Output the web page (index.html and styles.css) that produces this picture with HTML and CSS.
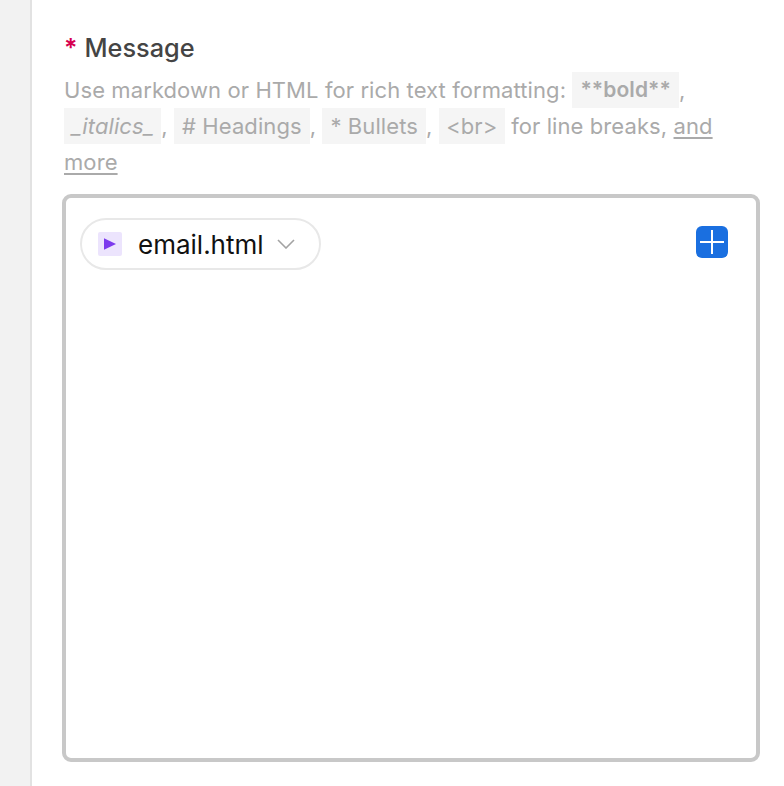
FILE: index.html
```html
<!DOCTYPE html>
<html lang="en">
<head>
<meta charset="utf-8">
<title>Message</title>
<link rel="stylesheet" href="styles.css">
</head>
<body>
<div class="page">
  <aside class="rail"></aside>
  <main class="field">
    <div class="label"><span class="req">*</span><span>Message</span></div>
    <p class="hint">Use markdown or HTML for rich text formatting: <code class="chip chip-bold">**bold**</code>, <code class="chip chip-it">_italics_</code>, <code class="chip"># Headings</code>, <code class="chip">* Bullets</code>, <code class="chip chip-br">&lt;br&gt;</code> for line breaks, <a class="more" href="#">and more</a></p>
    <div class="editor">
      <div class="file">
        <span class="file-icon"><svg viewBox="0 0 12 12" width="12" height="12"><path d="M0 0.2 L12 6 L0 11.8 Z" fill="#7c3aed"/></svg></span>
        <span class="file-name">email.html</span>
        <svg class="chev" viewBox="0 0 18 10" width="18" height="10"><path d="M1 1 L9 9 L17 1" fill="none" stroke="#a3a3a3" stroke-width="1.6"/></svg>
      </div>
      <button class="add" type="button" aria-label="Add"><svg viewBox="0 0 32 32" width="32" height="32"><path d="M4 16H28M16 4V28" stroke="#fff" stroke-width="2"/></svg></button>
    </div>
  </main>
</div>
</body>
</html>
```
FILE: styles.css
```css
* { box-sizing: border-box; }
html, body { margin: 0; height: 100%; background: #fff; }
body { font-family: Inter, "Liberation Sans", sans-serif; overflow: hidden; }
.page { display: flex; height: 786px; }
.rail { width: 32px; flex: none; background: #f2f2f2; border-right: 2px solid #e2e2e2; }
.field { width: 728px; padding: 30px 0 0 30px; flex: none; }
.label { display: flex; align-items: baseline; gap: 7px; height: 36px; margin-bottom: 6px; padding-left: 2px; font-size: 25.3px; font-weight: 500; line-height: 36px; color: #444; }
.req { color: #d6004f; font-size: 25px; font-weight: 600; }
.hint { margin: 0 0 0 2px; font-size: 22px; line-height: 36px; color: #aaa; letter-spacing: 0.09px; }
.chip { display: inline-block; height: 36px; padding: 0 8px; background: #f5f5f5; font-family: inherit; font-size: 22px; line-height: 36px; vertical-align: top; }
.chip-bold { font-weight: 600; font-size: 21px; }
.chip-it { padding: 0 7.5px; font-style: italic; }
.chip-br { padding: 0 7.5px; }
.more { color: #aaa; text-decoration: underline; text-underline-offset: 3px; }
.editor { display: flex; justify-content: space-between; align-items: flex-start; height: 568px; margin-top: 14px; padding: 20px 28px 0 14px; border: 4px solid #c8c8c8; border-radius: 9px; }
.file { display: flex; align-items: center; width: 241px; height: 52px; padding: 0 16px; border: 2px solid #e8e8e8; border-radius: 26px; }
.file-icon { display: flex; align-items: center; justify-content: center; width: 24px; height: 24px; background: #ece4fd; border-radius: 2px; flex: none; }
.file-name { margin-left: 16px; font-size: 26px; color: #111; }
.chev { margin-left: 13px; flex: none; }
.add { display: block; width: 32px; height: 32px; margin-top: 8px; padding: 0; background: #1a6fe0; border: 0; border-radius: 6px; }
.add svg { display: block; }
```
